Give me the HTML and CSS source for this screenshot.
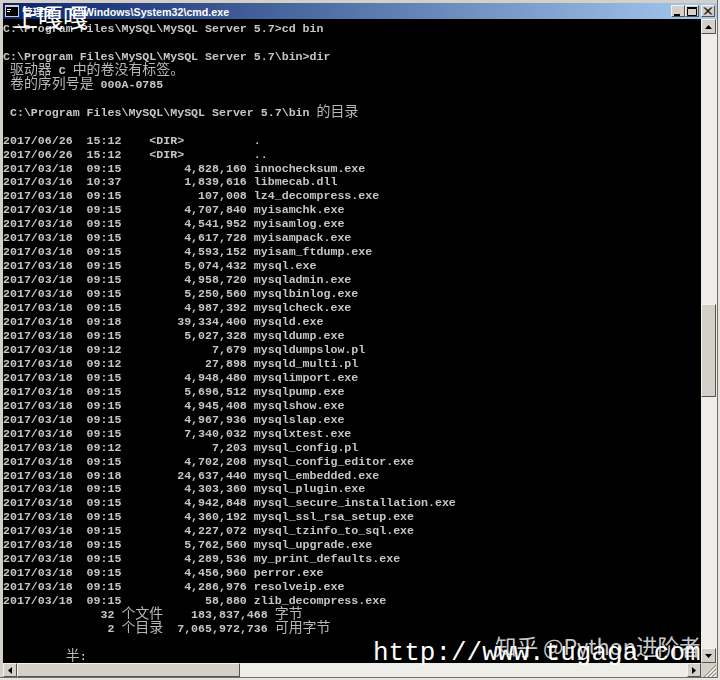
FILE: index.html
```html
<!DOCTYPE html>
<html lang="zh">
<head>
<meta charset="utf-8">
<title>cmd.exe</title>
<link rel="stylesheet" href="styles.css">
</head>
<body>
<div class="window">
  <div class="titlebar">
    <svg class="app-icon" width="14" height="12" viewBox="0 0 14 12"><rect width="14" height="12" fill="#d4d0c8"/><rect x="1" y="2" width="12" height="9" fill="#000"/><rect x="2" y="4" width="4" height="1" fill="#fff"/><rect x="2" y="6" width="3" height="1" fill="#fff"/></svg>
    <span class="title-text">管理员:    C:\Windows\System32\cmd.exe</span>
    <div class="caption-buttons">
      <button class="cap-btn"><svg width="12" height="11" viewBox="0 0 12 11"><rect x="2" y="8" width="6" height="2" fill="#000"/></svg></button>
      <button class="cap-btn"><svg width="12" height="11" viewBox="0 0 12 11"><path d="M1.5 2.5h9v7h-9z M1 1.5h10" fill="none" stroke="#000"/></svg></button>
      <button class="cap-btn cap-close"><svg width="12" height="11" viewBox="0 0 12 11"><path d="M2 1.5l7 7M3 1.5l7 7M9 1.5l-7 7M10 1.5l-7 7" fill="none" stroke="#000"/></svg></button>
    </div>
  </div>
  <div class="client">
    <pre class="console">
C:\Program Files\MySQL\MySQL Server 5.7&gt;cd bin

C:\Program Files\MySQL\MySQL Server 5.7\bin&gt;dir
 <i>驱动器</i> C <i>中的卷没有标签。</i>
 <i>卷的序列号是</i> 000A-0785

 C:\Program Files\MySQL\MySQL Server 5.7\bin <i>的目录</i>

2017/06/26  15:12    &lt;DIR&gt;          .
2017/06/26  15:12    &lt;DIR&gt;          ..
2017/03/18  09:15         4,828,160 innochecksum.exe
2017/03/16  10:37         1,839,616 libmecab.dll
2017/03/18  09:15           107,008 lz4_decompress.exe
2017/03/18  09:15         4,707,840 myisamchk.exe
2017/03/18  09:15         4,541,952 myisamlog.exe
2017/03/18  09:15         4,617,728 myisampack.exe
2017/03/18  09:15         4,593,152 myisam_ftdump.exe
2017/03/18  09:15         5,074,432 mysql.exe
2017/03/18  09:15         4,958,720 mysqladmin.exe
2017/03/18  09:15         5,250,560 mysqlbinlog.exe
2017/03/18  09:15         4,987,392 mysqlcheck.exe
2017/03/18  09:18        39,334,400 mysqld.exe
2017/03/18  09:15         5,027,328 mysqldump.exe
2017/03/18  09:12             7,679 mysqldumpslow.pl
2017/03/18  09:12            27,898 mysqld_multi.pl
2017/03/18  09:15         4,948,480 mysqlimport.exe
2017/03/18  09:15         5,696,512 mysqlpump.exe
2017/03/18  09:15         4,945,408 mysqlshow.exe
2017/03/18  09:15         4,967,936 mysqlslap.exe
2017/03/18  09:15         7,340,032 mysqlxtest.exe
2017/03/18  09:12             7,203 mysql_config.pl
2017/03/18  09:15         4,702,208 mysql_config_editor.exe
2017/03/18  09:18        24,637,440 mysql_embedded.exe
2017/03/18  09:15         4,303,360 mysql_plugin.exe
2017/03/18  09:15         4,942,848 mysql_secure_installation.exe
2017/03/18  09:15         4,360,192 mysql_ssl_rsa_setup.exe
2017/03/18  09:15         4,227,072 mysql_tzinfo_to_sql.exe
2017/03/18  09:15         5,762,560 mysql_upgrade.exe
2017/03/18  09:15         4,289,536 my_print_defaults.exe
2017/03/18  09:15         4,456,960 perror.exe
2017/03/18  09:15         4,286,976 resolveip.exe
2017/03/18  09:15            58,880 zlib_decompress.exe
              32 <i>个文件</i>    183,837,468 <i>字节</i>
               2 <i>个目录</i>  7,065,972,736 <i>可用字节</i>

         <i>半</i>:</pre>
    <div class="vscroll">
      <button class="sb-btn"><svg width="7" height="4" viewBox="0 0 7 4"><path d="M3.5 0L7 4H0z"/></svg></button>
      <div class="v-track"><div class="v-thumb"></div></div>
      <button class="sb-btn"><svg width="7" height="4" viewBox="0 0 7 4"><path d="M3.5 4L7 0H0z"/></svg></button>
    </div>
  </div>
  <div class="hscroll">
    <button class="sb-btn"><svg width="4" height="7" viewBox="0 0 4 7"><path d="M0 3.5L4 0v7z"/></svg></button>
    <div class="h-thumb"></div>
    <div class="h-track"></div>
    <button class="sb-btn"><svg width="4" height="7" viewBox="0 0 4 7"><path d="M4 3.5L0 0v7z"/></svg></button>
    <div class="grip"><svg width="16" height="14" viewBox="0 0 16 14"><path d="M15 2L3 14M15 6L7 14M15 10L11 14" stroke="#8a8880" fill="none"/><path d="M15 4L5 14M15 8L9 14M15 12L13 14" stroke="#fff" fill="none"/></svg></div>
  </div>
</div>
<div class="mark mark-top">上嘎嘎</div>
<div class="mark mark-zhihu">知乎 @Python进阶者</div>
<div class="mark mark-url">http://www.tugaga.com</div>
</body>
</html>
```
FILE: styles.css
```css
* { box-sizing: border-box; }
html, body { margin: 0; padding: 0; background: #e6e5e0; }
body { width: 720px; height: 680px; overflow: hidden; position: relative; }
.window {
  width: 718px; height: 678px;
  display: flex; flex-direction: column;
  padding: 3px 0 0 3px;
  background: #d4d0c8;
  border-right: 1px solid #6f6d68;
  border-bottom: 1px solid #6f6d68;
}
.titlebar {
  height: 16px; flex: none;
  display: flex; align-items: center;
  padding-left: 2px;
  background: linear-gradient(90deg, #0a246a 0%, #a6caf0 100%);
}
.app-icon { flex: none; margin-right: 3px; }
.title-text { font: bold 10.7px "Liberation Sans", "Noto Sans CJK SC", sans-serif; color: #fff; white-space: pre; flex: 1; }
.caption-buttons { display: flex; margin-right: 2px; flex: none; }
.cap-btn, .sb-btn {
  padding: 0; margin: 0; flex: none;
  display: flex; align-items: center; justify-content: center;
  background: #d4d0c8;
  border: 1px solid;
  border-color: #f4f3ef #55534e #55534e #f4f3ef;
}
.cap-btn { width: 14px; height: 12px; }
.cap-close { margin-left: 2px; }
.client { flex: 1; min-height: 0; display: flex; }
.console {
  flex: 1; min-width: 0; margin: 0;
  padding-top: 3px;
  background: #000; color: #c6c6c6;
  font: bold 11.62px/13.95px "Liberation Mono", monospace;
  overflow: hidden;
  filter: blur(0.4px);
}
.console i { font: normal 13.94px/0 "Noto Sans CJK SC", sans-serif; color: #b8b8b8; }
.vscroll { width: 16px; flex: none; display: flex; flex-direction: column; background: #eeede9; }
.sb-btn { width: 15px; height: 15px; }
.hscroll .sb-btn { height: 14px; width: 14px; }
.v-track { flex: 1; padding-top: 270px; }
.v-thumb {
  width: 15px; height: 93px; background: #d4d0c8;
  border: 1px solid; border-color: #f4f3ef #55534e #55534e #f4f3ef;
}
.hscroll { height: 14px; flex: none; display: flex; background: #eeede9; }
.h-thumb {
  width: 223px; background: #d4d0c8;
  border: 1px solid; border-color: #f4f3ef #55534e #55534e #f4f3ef;
}
.h-track { flex: 1; }
.grip { width: 16px; flex: none; background: #d4d0c8; }
.mark { position: absolute; white-space: nowrap; color: #fff; }
.mark-top { left: 13px; top: 1px; font: 25px/30px "Noto Sans CJK SC", sans-serif; }
.mark-zhihu { left: 495px; top: 632px; font: 21.6px/28px "Noto Sans CJK SC", sans-serif; color: rgba(255,255,255,.8); }
.mark-url { left: 373px; top: 638px; font: 26px/30px "Liberation Mono", monospace; }
```
